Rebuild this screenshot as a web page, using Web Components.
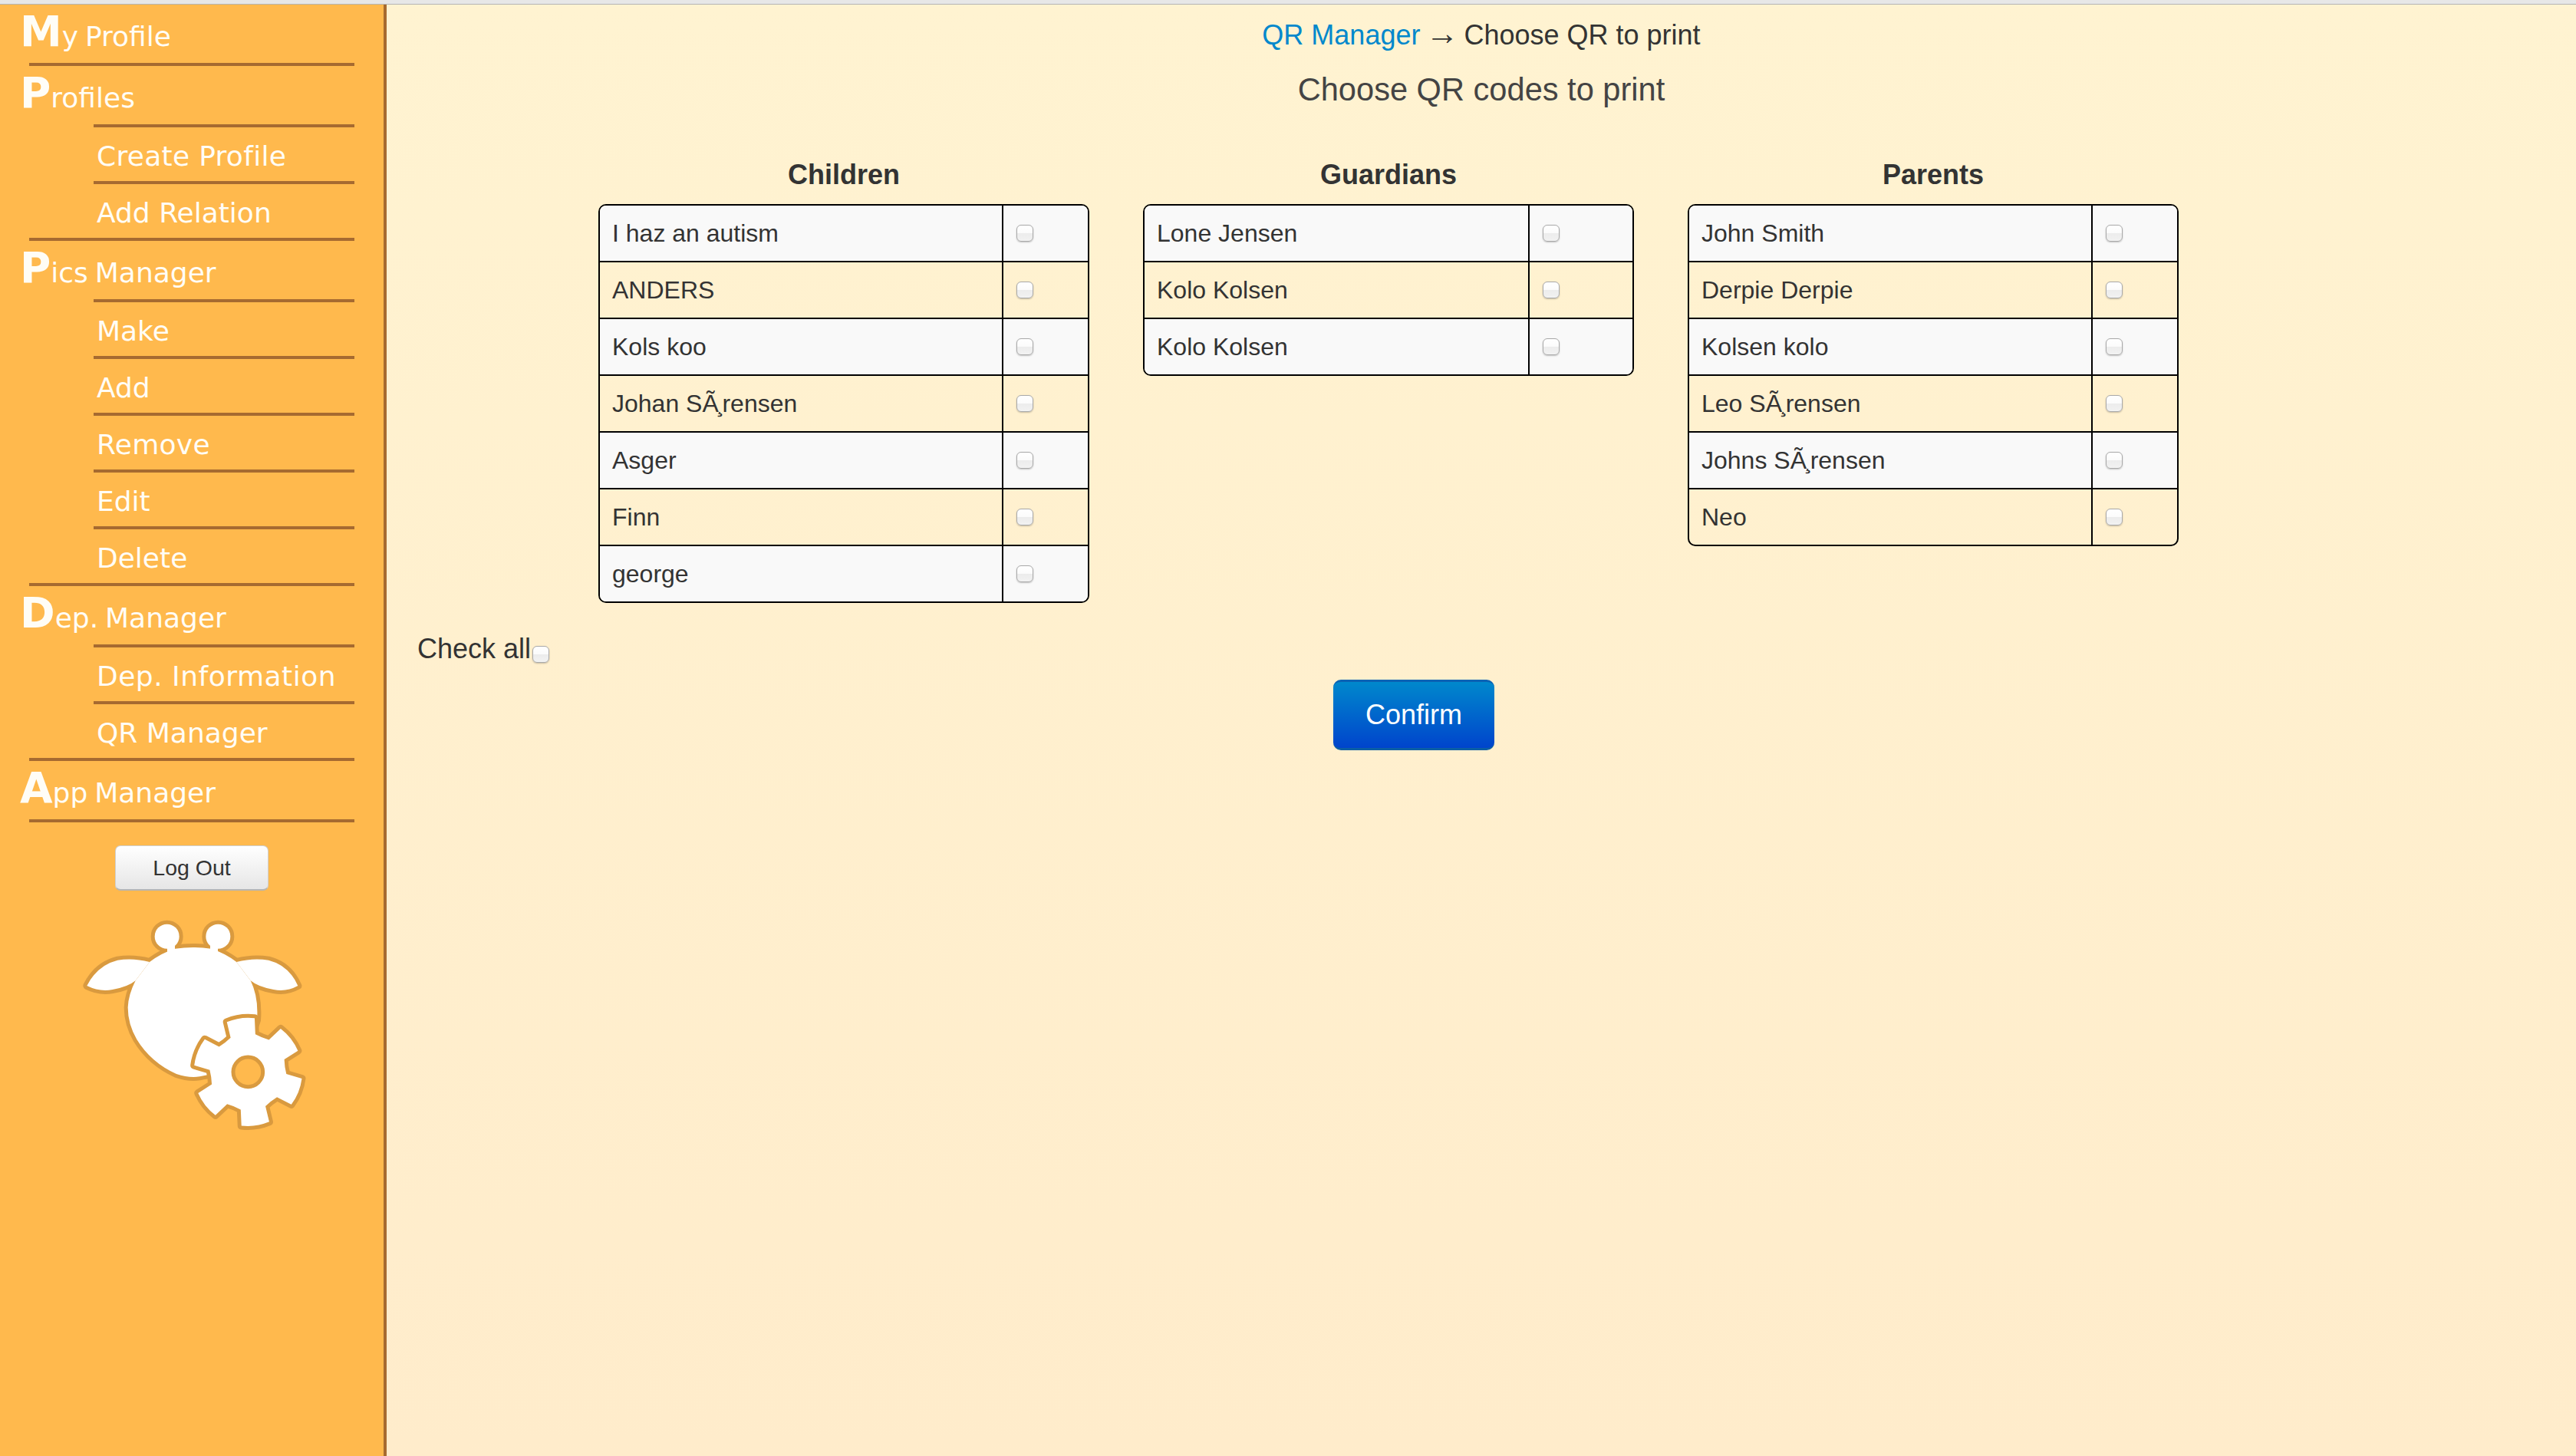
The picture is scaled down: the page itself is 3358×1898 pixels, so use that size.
<!DOCTYPE html>
<html lang="en">
<head>
<meta charset="utf-8">
<title>Choose QR to print</title>
<style>
html,body{margin:0;padding:0;height:100%;background:#ffb94d}
.ced{letter-spacing:-3px;margin-left:-3px}
</style>
</head>
<body>
<app-shell>
  <side-nav slot="nav">
    <nav-item head long>My Profile</nav-item>
    <nav-item head>Profiles</nav-item>
    <nav-item spacing=".3">Create Profile</nav-item>
    <nav-item long>Add Relation</nav-item>
    <nav-item head>Pics Manager</nav-item>
    <nav-item>Make</nav-item>
    <nav-item>Add</nav-item>
    <nav-item spacing=".3">Remove</nav-item>
    <nav-item>Edit</nav-item>
    <nav-item long>Delete</nav-item>
    <nav-item head>Dep. Manager</nav-item>
    <nav-item spacing=".5">Dep. Information</nav-item>
    <nav-item long>QR Manager</nav-item>
    <nav-item head long>App Manager</nav-item>
    <logout-button>Log Out</logout-button>
    <app-logo></app-logo>
  </side-nav>
  <qr-page>
    <qr-list title="Children" check="112">
      <qr-row>I haz an autism</qr-row>
      <qr-row>ANDERS</qr-row>
      <qr-row>Kols koo</qr-row>
      <qr-row>Johan SÃ<span class="ced">¸</span>rensen</qr-row>
      <qr-row>Asger</qr-row>
      <qr-row>Finn</qr-row>
      <qr-row>george</qr-row>
    </qr-list>
    <qr-list title="Guardians" check="136">
      <qr-row>Lone Jensen</qr-row>
      <qr-row>Kolo Kolsen</qr-row>
      <qr-row>Kolo Kolsen</qr-row>
    </qr-list>
    <qr-list title="Parents" check="112">
      <qr-row>John Smith</qr-row>
      <qr-row>Derpie Derpie</qr-row>
      <qr-row>Kolsen kolo</qr-row>
      <qr-row>Leo SÃ<span class="ced">¸</span>rensen</qr-row>
      <qr-row>Johns SÃ<span class="ced">¸</span>rensen</qr-row>
      <qr-row>Neo</qr-row>
    </qr-list>
  </qr-page>
</app-shell>
<script>
const CHECK_CSS = `
  input.cb{appearance:none;-webkit-appearance:none;box-sizing:border-box;width:22px;height:22px;margin:0;display:block;
    border:1.5px solid #a9a9a9;border-radius:6px;flex:none;
    background:linear-gradient(#ffffff 0%,#fbfbfb 48%,#ececec 52%,#f2f2f2 100%);
    box-shadow:0 1px 2px rgba(0,0,0,.22)}
`;
function def(name, render){
  customElements.define(name, class extends HTMLElement{
    constructor(){ super(); this.attachShadow({mode:'open'}); this.shadowRoot.innerHTML = render(this); }
  });
}
function defLate(name, render){
  customElements.define(name, class extends HTMLElement{
    connectedCallback(){
      if(this.shadowRoot) return;
      this.attachShadow({mode:'open'}); this.shadowRoot.innerHTML = render(this);
    }
  });
}
def('app-shell', () => `<style>
  :host{display:flex;flex-direction:column;min-height:1898px;height:1898px;overflow:hidden}
  .strip{height:5px;background:#e7e7e7;border-bottom:1px solid #b4b4b4;flex:none}
  .row{flex:1;display:flex;min-height:0}
</style>
<div class="strip"></div>
<div class="row"><slot name="nav"></slot><slot></slot></div>`);

def('side-nav', () => `<style>
  :host{display:block;box-sizing:border-box;width:504px;flex:none;background:#ffb94d;border-right:4px solid #a66a30;
    font-family:"DejaVu Sans",Verdana,sans-serif;color:#fffdf6}
</style><slot></slot>`);

defLate('nav-item', (el) => {
  const head = el.hasAttribute('head');
  const long = el.hasAttribute('long');
  const sp = el.getAttribute('spacing') || 0;
  const t = el.textContent;
  const inner = head
    ? `<span class="big">${t[0]}</span>${t.slice(1)}`
    : t;
  return `<style>
    :host{display:block;height:${head?80:74}px;box-sizing:border-box;position:relative}
    .text{height:${head?76:70}px;box-sizing:border-box;padding:${head?'24px 0 0 26px':'20px 0 0 126px'};
      font-size:36px;line-height:36px;white-space:nowrap;letter-spacing:${sp}px;word-spacing:${head?-2.5:0}px}
    .big{font-size:55px;font-weight:700;line-height:0}
    .rule{height:4px;margin-left:${long?38:122}px;width:${long?424:340}px;background:#a66a30}
  </style><div class="text">${inner}</div><div class="rule"></div>`;
});

def('logout-button', () => `<style>
  :host{display:block;width:200px;height:59px;box-sizing:border-box;margin:30px 0 0 150px;
    border:1px solid #cfcfcf;border-bottom:2px solid #b5b5b5;border-radius:7px;
    background:linear-gradient(#ffffff,#e6e6e6);
    font:28.5px/56px "Liberation Sans",Arial,sans-serif;color:#333;text-align:center}
</style><slot></slot>`);

def('app-logo', () => {
  const cx=730, cy=652, rB=150, rT=212, tb=19, tt=15;
  const P=(a,r)=>{const t=(a-90)*Math.PI/180;return (cx+r*Math.cos(t)).toFixed(1)+','+(cy+r*Math.sin(t)).toFixed(1)};
  let d='';
  for(let k=0;k<6;k++){
    const a=-8+60*k;
    d+=(k?'L':'M')+P(a-tb,rB)+' L'+P(a-tt,rT)+' Q'+P(a,rT+7)+' '+P(a+tt,rT)+' L'+P(a+tb,rB)+' Q'+P(a+30,rB-6)+' '+P(a+60-tb,rB)+' ';
  }
  d+='Z';
  const head='M345,222 Q390,187 445,170 Q515,160 585,170 Q640,187 685,222 L740,295 Q772,360 765,450 L700,640 L560,666 Q510,680 450,660 Q350,615 295,525 Q260,465 260,400 Q262,350 290,295 Z';
  const earL='M345,222 Q280,205 220,215 Q140,235 100,315 Q150,340 200,330 Q260,320 290,295 Z';
  const earR='M685,222 Q750,205 810,215 Q890,235 925,315 Q880,340 830,330 Q770,320 740,295 Z';
  const body=`<circle cx="413" cy="122" r="48"/><circle cx="613" cy="122" r="48"/>
    <path d="M414,155 L444,155 L444,185 L414,185 Z"/><path d="M582,155 L612,155 L612,185 L582,185 Z"/>
    <path d="${head}"/><path d="${earL}"/><path d="${earR}"/>`;
  return `<style>:host{display:block;width:340px;height:310px;margin:19px 0 0 80px} svg{display:block}</style>
  <svg width="340" height="310" viewBox="0 0 1020 930" aria-hidden="true">
    <g fill="#d99a3f" stroke="#d99a3f" stroke-width="30" stroke-linejoin="round">${body}</g>
    <g fill="#fff">${body}</g>
    <path d="${d}" fill="#d99a3f" stroke="#d99a3f" stroke-width="30" stroke-linejoin="round"/>
    <path d="${d}" fill="#fff"/>
    <circle cx="730" cy="652" r="58" fill="#ffb94d" stroke="#d99a3f" stroke-width="15"/>
  </svg>`;
});

def('qr-page', () => `<style>
  :host{display:block;flex:1;min-width:0;box-sizing:border-box;padding-top:18px;
    background:linear-gradient(#fff3d1,#ffeccb);
    font-family:"Liberation Sans",Arial,Helvetica,sans-serif;color:#333}
  .crumb{font-size:36px;line-height:44px;text-align:center;height:44px}
  .crumb a{color:#0088cc;text-decoration:none}
  .arrow{font-size:43px;line-height:0;margin:0 -3px}
  h2{margin:24px 0 64px;font-weight:400;font-size:41.6px;line-height:50px;text-align:center;color:#444}
  .cols{display:flex;align-items:flex-start;gap:70px;margin-left:276px;height:618px}
  .all{display:flex;align-items:flex-start;margin:0 0 18px 40px;font-size:36px;line-height:44px;height:44px}
  .all input.cb{margin:18px 0 0 2px}
  .confirm{display:block;width:210px;height:92px;box-sizing:border-box;margin-left:1234px;
    border:0;border-top:3px solid #0a62b4;border-bottom:3px solid #0a5ea6;border-radius:10px;
    background:linear-gradient(#0088cc,#0044cc);color:#fff;font:36px/86px "Liberation Sans",Arial,sans-serif;text-align:center;padding:0}
  ${CHECK_CSS}
</style>
<div class="crumb"><a href="#">QR Manager</a> <span class="arrow">→</span> Choose QR to print</div>
<h2>Choose QR codes to print</h2>
<div class="cols"><slot></slot></div>
<div class="all"><span>Check all</span><input class="cb" type="checkbox" aria-label="Check all"></div>
<button class="confirm" type="button">Confirm</button>`);

defLate('qr-list', (el) => `<style>
  :host{display:block;width:640px;flex:none;--check:${el.getAttribute('check')}px}
  h3{margin:0 0 16px;font-size:36px;line-height:44px;font-weight:700;text-align:center;color:#333}
  .table{border:2px solid #000;border-radius:10px;overflow:hidden;background:transparent}
</style>
<h3>${el.getAttribute('title')}</h3>
<div class="table"><slot></slot></div>`);

def('qr-row', () => `<style>
  :host{display:flex;height:74px;box-sizing:border-box;border-bottom:2px solid #000;font-size:32px;line-height:72px;color:#333}
  :host(:nth-child(odd)){background:#f9f9f9}
  :host(:last-child){height:72px;border-bottom:0}
  .name{flex:1;padding-left:16px;white-space:nowrap;min-width:0}
  .check{width:var(--check);box-sizing:border-box;border-left:2px solid #000;flex:none;display:flex;align-items:center;padding-left:17px}
  ${CHECK_CSS}
</style>
<div class="name"><slot></slot></div>
<div class="check"><input class="cb" type="checkbox" aria-label="Select"></div>`);
</script>
</body>
</html>
